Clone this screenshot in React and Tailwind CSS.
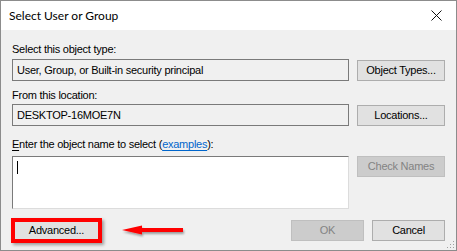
import React from 'react';

const titleFont = { fontFamily: 'Lato, "Liberation Sans", Arial, sans-serif' };
const bodyFont = { fontFamily: '"Liberation Sans", Arial, sans-serif' };

const Btn = ({ children, disabled, width = 'w-[88px]', className = '' }) => (
    <div
        className={`h-[21px] ${width} flex items-center justify-center text-[11px] tracking-[-0.25px] border ${
            disabled ? 'bg-[#cccccc] border-[#bfbfbf] text-[#838383]' : 'bg-[#e1e1e1] border-[#adadad] text-black'
        } ${className}`}
    >
        {children}
    </div>
);

const App = () => {
    return (
        <div className="w-[457px] h-[251px] border border-[#8c8c8c] bg-[#f0f0f0] flex flex-col overflow-hidden text-black" style={bodyFont}>
            {/* title bar */}
            <div className="h-[29px] bg-white flex items-center justify-between pl-[8px] pr-[10px] shrink-0">
                <span className="text-[12px] leading-[15px] text-black" style={titleFont}>Select User or Group</span>
                <svg width="11" height="11" viewBox="0 0 11 11" className="mr-[4px]">
                    <path d="M0.5 0.5 L10.5 10.5 M10.5 0.5 L0.5 10.5" stroke="#111" strokeWidth="1" />
                </svg>
            </div>

            {/* body */}
            <div className="relative flex-1 pl-[11px] pr-[11px] text-[11px] leading-[15px] tracking-[-0.25px]">
                <div className="mt-[12px]">Select this object type:</div>
                <div className="mt-[2px] flex items-start gap-x-[8px]">
                    <div className="w-[337px] h-[22px] border border-[#7a7a7a] bg-[#f0f0f0] flex items-center pl-[4px]">
                        User, Group, or Built-in security principal
                    </div>
                    <Btn className="mt-[1px]">Object Types...</Btn>
                </div>

                <div className="mt-[7px]">From this location:</div>
                <div className="mt-[1px] flex items-start gap-x-[8px]">
                    <div className="w-[337px] h-[22px] border border-[#7a7a7a] bg-[#f0f0f0] flex items-center pl-[4px]">
                        DESKTOP-16MOE7N
                    </div>
                    <Btn className="mt-[1px]">Locations...</Btn>
                </div>

                <div className="mt-[11px]">
                    <span className="underline underline-offset-2">E</span>nter the object name to select (
                    <span className="text-[#0066cc] underline underline-offset-2">examples</span>):
                </div>
                <div className="mt-[4px] flex items-start gap-x-[8px]">
                    <div className="w-[337px] h-[53px] border border-[#7a7a7a] border-r-[#dcdcdc] border-b-[#dcdcdc] bg-white pl-[4px] pt-[4px]">
                        <div className="w-px h-[13px] bg-black" />
                    </div>
                    <Btn disabled>Check Names</Btn>
                </div>

                <div className="mt-[11px] flex items-center h-[21px]">
                    <div className="w-[91px] h-[25px] border-4 border-[#ff0000] bg-[#e1e1e1] flex items-center justify-center -ml-[1px] shadow-[2px_2px_3px_rgba(0,0,0,0.35)]">
                        Advanced...
                    </div>
                    <svg width="68" height="14" viewBox="0 0 68 14" className="ml-[19px] mt-[1px]">
                        <defs>
                            <filter id="sh" x="-20%" y="-50%" width="140%" height="200%">
                                <feDropShadow dx="1" dy="2" stdDeviation="1.2" floodColor="#000" floodOpacity="0.35" />
                            </filter>
                        </defs>
                        <g filter="url(#sh)">
                            <polygon points="1,6 21,1.5 21,10.5" fill="#ff0000" />
                            <rect x="20" y="4" width="42" height="4" fill="#ff0000" />
                        </g>
                    </svg>
                    <div className="ml-auto flex gap-x-[8px]">
                        <Btn disabled width="w-[73px]">OK</Btn>
                        <Btn width="w-[73px]">Cancel</Btn>
                    </div>
                </div>

                {/* size grip */}
                <svg width="9" height="9" viewBox="0 0 9 9" className="absolute right-[1px] bottom-[1px]">
                    <rect x="7" y="1" width="1" height="1" fill="#a0a0a0" />
                    <rect x="4" y="4" width="1" height="1" fill="#a0a0a0" />
                    <rect x="7" y="4" width="1" height="1" fill="#a0a0a0" />
                    <rect x="1" y="7" width="1" height="1" fill="#a0a0a0" />
                    <rect x="4" y="7" width="1" height="1" fill="#a0a0a0" />
                    <rect x="7" y="7" width="1" height="1" fill="#a0a0a0" />
                </svg>
            </div>
        </div>
    );
};

export default App;
